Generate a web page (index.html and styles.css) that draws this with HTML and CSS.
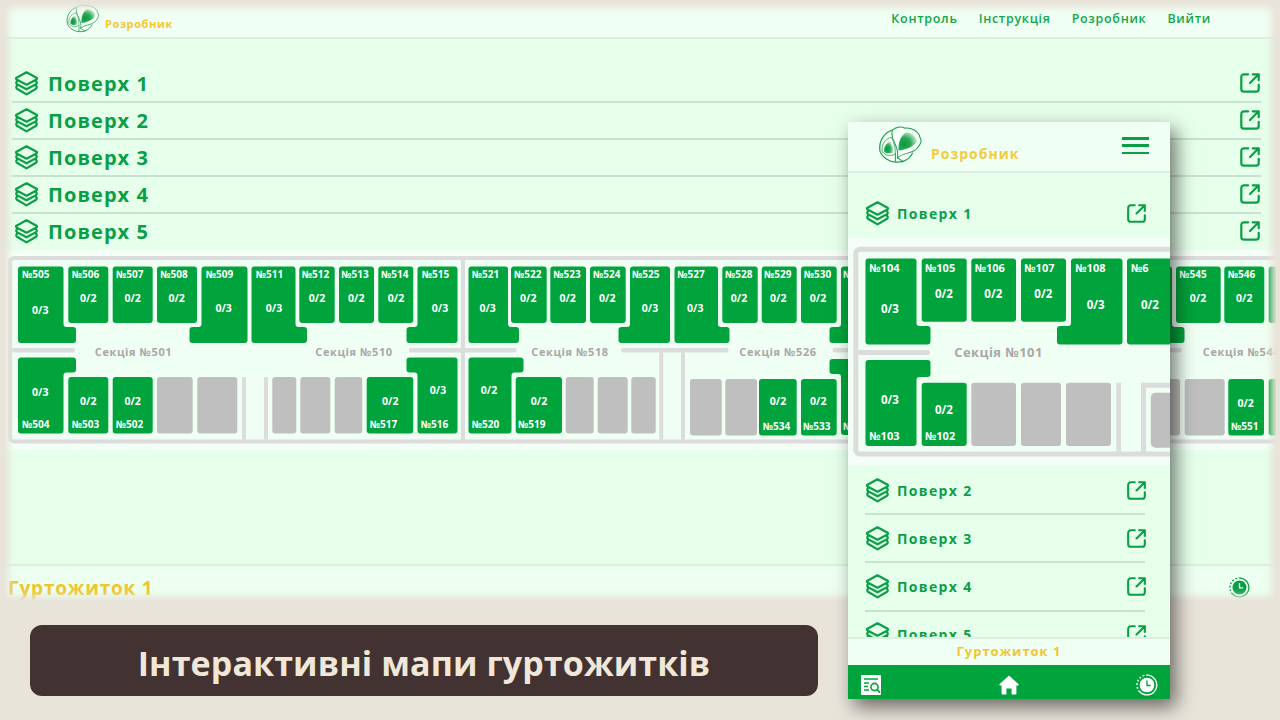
FILE: index.html
```html
<!DOCTYPE html>
<html lang="uk">
<head>
<meta charset="utf-8">
<title>Інтерактивні мапи гуртожитків</title>
<link rel="stylesheet" href="styles.css">
</head>
<body>
<svg class="sprite" aria-hidden="true">
  <defs>
    <radialGradient id="fan" cx="0.3" cy="0.65" r="0.8">
      <stop offset="0" stop-color="#0b9a3c"/>
      <stop offset="0.45" stop-color="#2aa956"/>
      <stop offset="1" stop-color="#e0f7e6"/>
    </radialGradient>
    <symbol id="logo" viewBox="0 0 45 38">
      <path d="M15 4C8 6 1 14 3 25C8 37 28 40 35 26" fill="#f6fff8" stroke="#1f9f50" stroke-width="1.2"/>
      <path d="M15 4C18 1 24 0 27 2C33 1 41 5 42 11C45 15 41 20 38 23C33 27 26 26 20 31C21 26 20 22 17 16C15 12 14 8 15 4z" fill="#f6fff8" stroke="#1f9f50" stroke-width="1"/>
      <path d="M21 22C21 15 24 8 29 6C35 7 39 11 39 15C36 20 28 23 21 24z" fill="url(#fan)"/>
      <path d="M5 21C6 15 10 12 14 11C17 15 18 22 18 27C14 30 8 29 5 25z" fill="#f6fff8" stroke="#1f9f50" stroke-width=".8"/>
      <path d="M7 22C8 18 10 16 13 15C15 19 16 22 16 26C13 27 9 27 7 25z" fill="url(#fan)"/>
      <path d="M18 27L18 35M20 31L26 35" fill="none" stroke="#1f9f50" stroke-width="1"/>
    </symbol>
    <symbol id="layers" viewBox="0 0 24 24">
      <path d="M12 1.2L21.6 6.4Q22.6 7.3 21.6 8.2L12 13.2L2.4 8.2Q1.4 7.3 2.4 6.4z M3.4 9.2Q1.2 11 2.8 12.6L12 17.6L21.2 12.6Q22.8 11 20.6 9.2 M3.4 13.6Q1.2 15.4 2.8 17L12 22.4L21.2 17Q22.8 15.4 20.6 13.6" fill="none" stroke="currentColor" stroke-width="2.1" stroke-linecap="round" stroke-linejoin="round"/>
    </symbol>
    <symbol id="ext" viewBox="0 0 24 24">
      <path d="M10 2.5H5.5a3 3 0 0 0-3 3v13a3 3 0 0 0 3 3h13a3 3 0 0 0 3-3V14M12 12L21.5 2.5M15 2.5h6.5V9" fill="none" stroke="currentColor" stroke-width="2.4" stroke-linecap="round" stroke-linejoin="round"/>
    </symbol>
    <symbol id="clock" viewBox="0 0 24 24">
      <path d="M12 1.2A10.8 10.8 0 1 1 4 19.4" fill="none" stroke="currentColor" stroke-width="1.4"/>
      <path d="M4 19.4A10.8 10.8 0 0 1 12 1.2" fill="none" stroke="currentColor" stroke-width="1.6" stroke-dasharray="2 2"/>
      <circle cx="12" cy="12" r="8" fill="currentColor"/>
      <path d="M12 7.5V12.5H15.5" fill="none" stroke="var(--hands)" stroke-width="1.5" stroke-linecap="round"/>
    </symbol>
  </defs>
</svg>

<section class="desk">
  <header class="desk-head">
    <svg class="desk-logo"><use href="#logo"/></svg>
    <span class="desk-brand">Розробник</span>
    <nav class="desk-nav">
      <a>Контроль</a><a>Інструкція</a><a>Розробник</a><a>Вийти</a>
    </nav>
  </header>
  <main class="desk-main">
    <div class="desk-row"><svg class="desk-ico"><use href="#layers"/></svg><span class="desk-title">Поверх 1</span><svg class="desk-ext"><use href="#ext"/></svg></div>
    <div class="desk-row"><svg class="desk-ico"><use href="#layers"/></svg><span class="desk-title">Поверх 2</span><svg class="desk-ext"><use href="#ext"/></svg></div>
    <div class="desk-row"><svg class="desk-ico"><use href="#layers"/></svg><span class="desk-title">Поверх 3</span><svg class="desk-ext"><use href="#ext"/></svg></div>
    <div class="desk-row"><svg class="desk-ico"><use href="#layers"/></svg><span class="desk-title">Поверх 4</span><svg class="desk-ext"><use href="#ext"/></svg></div>
    <div class="desk-row desk-row-last"><svg class="desk-ico"><use href="#layers"/></svg><span class="desk-title">Поверх 5</span><svg class="desk-ext"><use href="#ext"/></svg></div>
    <svg class="desk-map" viewBox="4 250 1272 200">
      <rect class="wall-line" x="10" y="258" width="1300" height="183.5" rx="4"/>
      <g class="wall">
        <rect x="461" y="258" width="4" height="183"/>
        <rect x="12" y="348" width="63" height="4.4" rx="2"/>
        <rect x="409" y="348" width="107.5" height="4.4" rx="2"/>
        <rect x="621" y="348" width="107.5" height="4.4" rx="2"/>
        <rect x="832.5" y="348" width="40" height="4.4" rx="2"/>
        <rect x="1130" y="348" width="51.5" height="4.4" rx="2"/>
        <rect x="242" y="377" width="4" height="63" rx="1"/>
        <rect x="264" y="377" width="4" height="63" rx="1"/>
        <rect x="659.3" y="350" width="4" height="90"/>
        <rect x="681" y="350" width="4" height="90"/>
      </g>
      <g class="free">
        <rect x="157" y="377" width="35.7" height="56.5" rx="3"/>
        <rect x="197.3" y="377" width="40" height="56.5" rx="3"/>
        <rect x="272.3" y="377" width="24" height="56.5" rx="3"/>
        <rect x="300.3" y="377" width="30" height="56.5" rx="3"/>
        <rect x="334.7" y="377" width="27.6" height="56.5" rx="3"/>
        <rect x="565.7" y="377" width="28" height="56.5" rx="3"/>
        <rect x="597.7" y="377" width="30" height="56.5" rx="3"/>
        <rect x="631.3" y="377" width="24.4" height="56.5" rx="3"/>
        <rect x="690" y="379" width="31.7" height="56.5" rx="3"/>
        <rect x="725.3" y="379" width="31.7" height="56.5" rx="3"/>
        <rect x="1140" y="379" width="40" height="56.5" rx="3"/>
        <rect x="1184.7" y="379" width="40" height="56.5" rx="3"/>
      </g>
      <g class="room">
        <path d="M21 266.5H60.5q3 0 3 3V324q0 3 3 3H73q3 0 3 3V340q0 3-3 3H21q-3 0-3-3V269.5q0-3 3-3z"/>
        <rect x="68.3" y="266.5" width="40" height="56.5" rx="3"/>
        <rect x="112.7" y="266.5" width="40" height="56.5" rx="3"/>
        <rect x="157" y="266.5" width="40" height="56.5" rx="3"/>
        <path d="M204.5 266.5H244.5q3 0 3 3V340q0 3-3 3H192.5q-3 0-3-3V330q0-3 3-3H198.5q3 0 3-3V269.5q0-3 3-3z"/>
        <path d="M254.5 266.5H292.5q3 0 3 3V324q0 3 3 3H304q3 0 3 3V340q0 3-3 3H254.5q-3 0-3-3V269.5q0-3 3-3z"/>
        <rect x="299.3" y="266.5" width="35.4" height="56.5" rx="3"/>
        <rect x="339" y="266.5" width="35" height="56.5" rx="3"/>
        <rect x="378.3" y="266.5" width="35" height="56.5" rx="3"/>
        <path d="M420.5 266.5H454.5q3 0 3 3V340q0 3-3 3H409.5q-3 0-3-3V330q0-3 3-3H414.5q3 0 3-3V269.5q0-3 3-3z"/>
        <path d="M471.5 266.5H505q3 0 3 3V324q0 3 3 3H516q3 0 3 3V340q0 3-3 3H471.5q-3 0-3-3V269.5q0-3 3-3z"/>
        <rect x="511" y="266.5" width="35.7" height="56.5" rx="3"/>
        <rect x="550.3" y="266.5" width="35.7" height="56.5" rx="3"/>
        <rect x="590" y="266.5" width="35.7" height="56.5" rx="3"/>
        <path d="M633 266.5H667q3 0 3 3V340q0 3-3 3H621.5q-3 0-3-3V330q0-3 3-3H627q3 0 3-3V269.5q0-3 3-3z"/>
        <path d="M677.5 266.5H715q3 0 3 3V324q0 3 3 3H726.5q3 0 3 3V340q0 3-3 3H677.5q-3 0-3-3V269.5q0-3 3-3z"/>
        <rect x="722.3" y="266.5" width="35.4" height="56.5" rx="3"/>
        <rect x="761.7" y="266.5" width="35" height="56.5" rx="3"/>
        <rect x="801" y="266.5" width="35.7" height="56.5" rx="3"/>
        <path d="M844 266.5H882q3 0 3 3V340q0 3-3 3H832.5q-3 0-3-3V330q0-3 3-3H838q3 0 3-3V269.5q0-3 3-3z"/>
        <path d="M1133 266.5H1169q3 0 3 3V324q0 3 3 3H1181.5q3 0 3 3V340q0 3-3 3H1133q-3 0-3-3V269.5q0-3 3-3z"/>
        <rect x="1176" y="266.5" width="44.7" height="56.5" rx="3"/>
        <rect x="1224.3" y="266.5" width="40" height="56.5" rx="3"/>
        <rect x="1268.7" y="266.5" width="30" height="56.5" rx="3"/>
        <path d="M21 357.5H73q3 0 3 3V369.5q0 3-3 3H66.5q-3 0-3 3V430.5q0 3-3 3H21q-3 0-3-3V360.5q0-3 3-3z"/>
        <rect x="68.3" y="377" width="40" height="56.5" rx="3"/>
        <rect x="112.7" y="377" width="40" height="56.5" rx="3"/>
        <rect x="366.7" y="377" width="46.6" height="56.5" rx="3"/>
        <path d="M409.5 357.5H454.5q3 0 3 3V430.5q0 3-3 3H420.5q-3 0-3-3V375.5q0-3-3-3H409.5q-3 0-3-3V360.5q0-3 3-3z"/>
        <path d="M471.5 357.5H520.5q3 0 3 3V369.5q0 3-3 3H514.5q-3 0-3 3V430.5q0 3-3 3H471.5q-3 0-3-3V360.5q0-3 3-3z"/>
        <rect x="515.7" y="377" width="46.3" height="56.5" rx="3"/>
        <rect x="759" y="379" width="37.7" height="56.5" rx="3"/>
        <rect x="801" y="379" width="35.7" height="56.5" rx="3"/>
        <path d="M832.5 359H882q3 0 3 3V432q0 3-3 3H844q-3 0-3-3V377q0-3-3-3H832.5q-3 0-3-3V362q0-3 3-3z"/>
        <rect x="1228.3" y="379" width="35.7" height="56.5" rx="3"/>
        <rect x="1268.7" y="379" width="30" height="56.5" rx="3"/>
      </g>
      <g class="no">
        <text x="22" y="278">№505</text><text x="71.7" y="278">№506</text><text x="116" y="278">№507</text><text x="160.3" y="278">№508</text><text x="205.7" y="278">№509</text><text x="255.7" y="278">№511</text><text x="301.7" y="278">№512</text><text x="341.3" y="278">№513</text><text x="381" y="278">№514</text><text x="421.7" y="278">№515</text>
        <text x="471.7" y="278">№521</text><text x="514" y="278">№522</text><text x="553.3" y="278">№523</text><text x="593" y="278">№524</text><text x="632" y="278">№525</text><text x="677.3" y="278">№527</text><text x="725" y="278">№528</text><text x="764" y="278">№529</text><text x="803.7" y="278">№530</text><text x="843" y="278">№531</text>
        <text x="1179.3" y="278">№545</text><text x="1227.7" y="278">№546</text>
        <text x="22" y="428">№504</text><text x="71.7" y="428">№503</text><text x="115.7" y="428">№502</text><text x="369.7" y="428">№517</text><text x="420.7" y="428">№516</text><text x="471.7" y="428">№520</text><text x="518" y="428">№519</text>
        <text x="762.7" y="430">№534</text><text x="803" y="430">№533</text><text x="843" y="430">№532</text><text x="1231" y="430">№551</text>
      </g>
      <g class="cnt">
        <text x="40.3" y="314">0/3</text><text x="88.3" y="302">0/2</text><text x="132.7" y="302">0/2</text><text x="176.7" y="302">0/2</text><text x="223.7" y="312">0/3</text><text x="274" y="312">0/3</text><text x="317" y="302">0/2</text><text x="356.3" y="302">0/2</text><text x="396" y="302">0/2</text><text x="440" y="312">0/3</text>
        <text x="487.7" y="312">0/3</text><text x="528.3" y="302">0/2</text><text x="567.7" y="302">0/2</text><text x="607.3" y="302">0/2</text><text x="650" y="312">0/3</text><text x="695.3" y="312">0/3</text><text x="739" y="302">0/2</text><text x="778.3" y="302">0/2</text><text x="818" y="302">0/2</text>
        <text x="1198" y="302">0/2</text><text x="1244.3" y="302">0/2</text>
        <text x="40.3" y="396">0/3</text><text x="88.3" y="405">0/2</text><text x="132.7" y="405">0/2</text><text x="390.3" y="405">0/2</text><text x="438" y="393.5">0/3</text><text x="489" y="393.5">0/2</text><text x="539" y="405">0/2</text><text x="778" y="405">0/2</text><text x="818.3" y="405">0/2</text><text x="1245.7" y="407">0/2</text>
      </g>
      <g class="sec">
        <text x="133.5" y="355.5">Секція №501</text><text x="354" y="355.5">Секція №510</text><text x="570" y="355.5">Секція №518</text><text x="778" y="355.5">Секція №526</text><text x="1241.5" y="355.5">Секція №544</text>
      </g>
    </svg>
  </main>
  <footer class="desk-foot">
    <span class="desk-dorm">Гуртожиток 1</span>
    <svg class="desk-clock"><use href="#clock"/></svg>
  </footer>
</section>

<section class="phone">
  <header class="ph-head">
    <svg class="ph-logo"><use href="#logo"/></svg>
    <span class="ph-brand">Розробник</span>
    <button class="burger" aria-label="Меню"><i></i><i></i><i></i></button>
  </header>
  <main class="ph-main">
    <div class="ph-row ph-row-first"><svg class="ph-ico"><use href="#layers"/></svg><span class="ph-title">Поверх 1</span><svg class="ph-ext"><use href="#ext"/></svg></div>
    <svg class="ph-map" viewBox="848 238 322 227">
      <rect class="wall-line wall-thick" x="855.8" y="249.3" width="400" height="204.7" rx="4"/>
      <g class="wall">
        <rect x="858" y="350" width="72" height="5" rx="2"/>
        <rect x="1116.3" y="382.7" width="4.7" height="70"/>
        <rect x="1141" y="382.7" width="5" height="70"/>
        <rect x="1141" y="382.7" width="40" height="5"/>
      </g>
      <g class="free">
        <rect x="971.3" y="382.7" width="44.7" height="63.3" rx="3"/>
        <rect x="1021" y="382.7" width="40" height="63.3" rx="3"/>
        <rect x="1066" y="382.7" width="45" height="63.3" rx="3"/>
        <rect x="1150.7" y="392.7" width="40" height="55" rx="5"/>
      </g>
      <g class="room">
        <path d="M868.5 258.5H913.5q3 0 3 3V323q0 3 3 3H927.5q3 0 3 3V341.5q0 3-3 3H868.5q-3 0-3-3V261.5q0-3 3-3z"/>
        <rect x="921.7" y="258.5" width="45" height="63.2" rx="3"/>
        <rect x="971.3" y="258.5" width="44.7" height="63.2" rx="3"/>
        <rect x="1021" y="258.5" width="45" height="63.2" rx="3"/>
        <path d="M1074 258.5H1119.5q3 0 3 3V341.5q0 3-3 3H1060q-3 0-3-3V329q0-3 3-3H1068q3 0 3-3V261.5q0-3 3-3z"/>
        <rect x="1127" y="258.5" width="60" height="86" rx="3"/>
        <path d="M868.5 360H927.5q3 0 3 3V374q0 3-3 3H919.5q-3 0-3 3V443q0 3-3 3H868.5q-3 0-3-3V363q0-3 3-3z"/>
        <rect x="921.7" y="382.7" width="45" height="63.3" rx="3"/>
      </g>
      <g class="no no-lg">
        <text x="869.3" y="272">№104</text><text x="925" y="272">№105</text><text x="974.7" y="272">№106</text><text x="1024.3" y="272">№107</text><text x="1075.3" y="272">№108</text><text x="1131" y="272">№6</text>
        <text x="869.3" y="439.5">№103</text><text x="925" y="439.5">№102</text>
      </g>
      <g class="cnt cnt-lg">
        <text x="890" y="313">0/3</text><text x="944" y="298">0/2</text><text x="993.3" y="298">0/2</text><text x="1043.3" y="298">0/2</text><text x="1095.7" y="309">0/3</text><text x="1150" y="309">0/2</text>
        <text x="890" y="404">0/3</text><text x="944" y="413.5">0/2</text>
      </g>
      <g class="sec sec-lg"><text x="998.5" y="356.5">Секція №101</text></g>
    </svg>
    <div class="ph-row"><svg class="ph-ico"><use href="#layers"/></svg><span class="ph-title">Поверх 2</span><svg class="ph-ext"><use href="#ext"/></svg></div>
    <div class="ph-row"><svg class="ph-ico"><use href="#layers"/></svg><span class="ph-title">Поверх 3</span><svg class="ph-ext"><use href="#ext"/></svg></div>
    <div class="ph-row"><svg class="ph-ico"><use href="#layers"/></svg><span class="ph-title">Поверх 4</span><svg class="ph-ext"><use href="#ext"/></svg></div>
    <div class="ph-row"><svg class="ph-ico"><use href="#layers"/></svg><span class="ph-title">Поверх 5</span><svg class="ph-ext"><use href="#ext"/></svg></div>
  </main>
  <div class="ph-dorm">Гуртожиток 1</div>
  <nav class="ph-bar">
    <svg class="bar-doc" viewBox="0 0 20 20">
      <path d="M1 0H19a1 1 0 0 1 1 1V19a1 1 0 0 1-1 1H1a1 1 0 0 1-1-1V1a1 1 0 0 1 1-1z" fill="#fff"/>
      <path d="M3 4H17M3 8H8M3 11.5H7M3 15H8" stroke="#00a33c" stroke-width="1.4" fill="none"/>
      <circle cx="13.5" cy="12" r="3.6" fill="#fff" stroke="#00a33c" stroke-width="1.6"/>
      <path d="M16 14.6L19 17.6" stroke="#00a33c" stroke-width="1.8"/>
    </svg>
    <svg class="bar-home" viewBox="0 0 20 20">
      <path d="M10 .5L19.6 9.2Q20 10.4 18.8 10.4H17.4V18.4Q17.4 19.6 16.2 19.6H12.6V13.6H7.4V19.6H3.8Q2.6 19.6 2.6 18.4V10.4H1.2Q0 10.4 .4 9.2z" fill="#fff"/>
    </svg>
    <svg class="bar-clock"><use href="#clock"/></svg>
  </nav>
</section>

<div class="caption">Інтерактивні мапи гуртожитків</div>
</body>
</html>
```
FILE: styles.css
```css
* { box-sizing: border-box; }
html, body { margin: 0; height: 100%; }
body {
  position: relative;
  width: 1280px;
  height: 720px;
  overflow: hidden;
  background: #e8e4da;
  font-family: "Open Sans", "Liberation Sans", sans-serif;
  color: #0a9f46;
}
.sprite { position: absolute; width: 0; height: 0; }

/* Desktop window */
.desk {
  position: absolute;
  left: 4px;
  top: 3px;
  width: 1272px;
  height: 598px;
  display: flex;
  flex-direction: column;
  background: #e6ffea;
  overflow: hidden;
}
.desk::after {
  content: "";
  position: absolute;
  inset: 0;
  box-shadow: inset 0 0 7px 5px #e8e4da;
  pointer-events: none;
}
.desk-head {
  height: 36px;
  flex: none;
  display: flex;
  align-items: flex-start;
  padding-left: 61px;
  background: #effff3;
  border-bottom: 2px solid #deefe2;
}
.desk-logo { width: 35px; height: 30px; margin-top: 1px; }
.desk-brand {
  margin: 13px 0 0 5px;
  font-size: 11px;
  line-height: 15px;
  font-weight: 700;
  letter-spacing: .6px;
  color: #f5c731;
}
.desk-nav {
  margin-left: auto;
  margin-right: 65px;
  margin-top: 6.5px;
  display: flex;
  gap: 21px;
  font-size: 12.5px;
  line-height: 17px;
  font-weight: 600;
  letter-spacing: .7px;
  color: #14a64a;
}
.desk-main { flex: 1; padding-top: 27px; }
.desk-row {
  height: 37px;
  margin: 0 15px 0 8px;
  padding: 0 0 1px 2px;
  display: flex;
  align-items: center;
  border-bottom: 2px solid #c9e2cf;
}
.desk-row-last { height: 36px; padding-bottom: 2px; border-bottom: none; }
.desk-ico { width: 25px; height: 25px; flex: none; }
.desk-title {
  margin-left: 9px;
  font-size: 20px;
  font-weight: 700;
  letter-spacing: 1.05px;
}
.desk-ext { width: 22px; height: 22px; margin-left: auto; flex: none; }
.desk-map {
  display: block;
  width: 1272px;
  height: 200px;
  background: #f3fff6;
}
.desk-foot {
  height: 37px;
  flex: none;
  display: flex;
  align-items: flex-start;
  padding: 10px 26px 0 4px;
  background: #ecfff0;
  border-top: 2px solid #d9f1df;
}
.desk-dorm { font-size: 19px; line-height: 24px; font-weight: 700; letter-spacing: .8px; color: #f0c52b; }
.desk-clock { --hands: #ecfff0; width: 21px; height: 21px; margin-top: 1px; margin-left: auto; color: #0a9f46; }

/* Floor plan */
.wall-line { fill: #effff3; stroke: #dcdcdc; stroke-width: 4; }
.wall-thick { stroke-width: 5; }
.wall rect { fill: #dcdcdc; }
.free rect { fill: #bfbfbf; }
.room path, .room rect { fill: #00a33c; }
.no text { font-size: 10px; font-weight: 700; fill: #fff; }
.no-lg text { font-size: 11px; }
.cnt text { font-size: 10.5px; font-weight: 700; fill: #fff; text-anchor: middle; }
.cnt-lg text { font-size: 11.5px; }
.sec text { font-size: 11px; font-weight: 700; fill: #aaa6a6; text-anchor: middle; letter-spacing: .6px; }
.sec-lg text { font-size: 13px; letter-spacing: .45px; }

/* Phone */
.phone {
  position: absolute;
  left: 848px;
  top: 122px;
  width: 322px;
  height: 577px;
  display: flex;
  flex-direction: column;
  background: #e6ffea;
  box-shadow: 6px 8px 18px rgba(0, 0, 0, .55);
}
.ph-head {
  height: 51px;
  flex: none;
  display: flex;
  align-items: flex-start;
  padding-left: 29px;
  background: #effff3;
  border-bottom: 2px solid #deefe2;
}
.ph-logo { width: 46px; height: 39px; margin-top: 4px; }
.ph-brand {
  margin: 22px 0 0 8px;
  font-size: 14px;
  line-height: 20px;
  font-weight: 700;
  letter-spacing: 1px;
  color: #f2cc3c;
}
.burger {
  margin: 15px 21px 0 auto;
  padding: 0;
  width: 27px;
  height: 17px;
  border: 0;
  background: none;
  display: flex;
  flex-direction: column;
  justify-content: space-between;
}
.burger i { display: block; height: 2.5px; background: #0a9f46; }
.ph-main { flex: 1; min-height: 0; overflow: hidden; padding-top: 17px; }
.ph-row {
  height: 48.2px;
  margin: 0 25px 0 17px;
  display: flex;
  align-items: center;
  border-bottom: 2px solid #c9e2cf;
}
.ph-row-first { padding-bottom: 2px; border-bottom: none; }
.ph-ico { width: 25px; height: 25px; flex: none; }
.ph-title { margin-left: 7px; font-size: 14px; font-weight: 700; letter-spacing: 1.35px; }
.ph-ext { width: 21px; height: 21px; margin-left: auto; margin-right: -2px; flex: none; }
.ph-map { display: block; width: 322px; height: 227px; margin-bottom: 1.8px; background: #f3fff6; }
.ph-dorm {
  height: 28px;
  flex: none;
  display: flex;
  align-items: center;
  justify-content: center;
  padding-bottom: 2px;
  background: #f0fff3;
  border-top: 2px solid #deefe2;
  font-size: 13px;
  font-weight: 700;
  letter-spacing: 1px;
  color: #f2c531;
}
.ph-bar {
  height: 34px;
  flex: none;
  display: flex;
  align-items: center;
  justify-content: space-between;
  padding: 5px 12px 0 13px;
  background: #00a33c;
}
.bar-doc, .bar-home { width: 20px; height: 20px; }
.bar-clock { --hands: #00a33c; width: 22px; height: 22px; color: #fff; }

/* Caption */
.caption {
  position: absolute;
  left: 30px;
  top: 625px;
  width: 788px;
  height: 71px;
  display: flex;
  align-items: center;
  justify-content: center;
  padding-top: 4px;
  border-radius: 12px;
  background: #423332;
  color: #f0e7d8;
  font-size: 34px;
  font-weight: 700;
  letter-spacing: .1px;
}
```
